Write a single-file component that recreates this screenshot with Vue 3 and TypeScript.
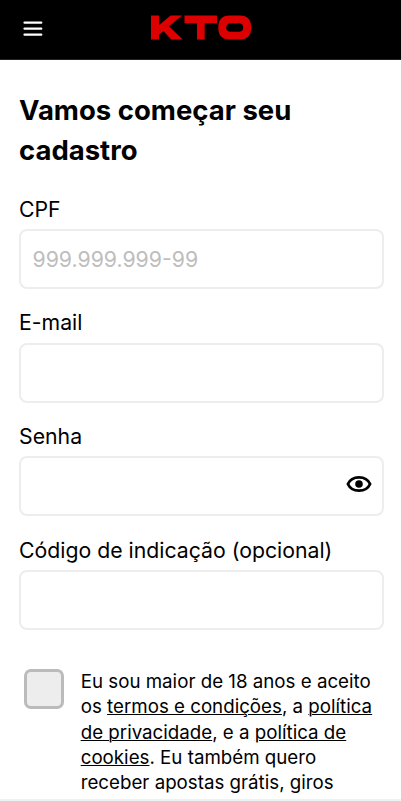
<script setup lang="ts">
import { ref } from 'vue'

interface Field {
  id: string
  label: string
  placeholder?: string
  type: string
}

const fields: Field[] = [
  { id: 'cpf', label: 'CPF', placeholder: '999.999.999-99', type: 'text' },
  { id: 'email', label: 'E-mail', type: 'email' },
  { id: 'senha', label: 'Senha', type: 'password' },
  { id: 'codigo', label: 'Código de indicação (opcional)', type: 'text' },
]

const values = ref<Record<string, string>>({ cpf: '', email: '', senha: '', codigo: '' })
const showPassword = ref(false)
const accepted = ref(false)

function inputType(field: Field): string {
  return field.type === 'password' && showPassword.value ? 'text' : field.type
}
</script>

<template>
  <div class="page">
    <header class="topbar">
      <button class="menu" type="button" aria-label="Menu">
        <svg width="20" height="18" viewBox="0 0 20 18">
          <path d="M1.6 2.6H18.2M1.6 8.6H18.2M1.6 14.6H18.2" stroke="#fff" stroke-width="2.4" stroke-linecap="round" />
        </svg>
      </button>
      <svg class="logo" width="102" height="26" viewBox="0 0 102 26" fill="#dd0000" aria-label="KTO">
        <path d="M1 1.5H9V11.2L20.5 1.5H32.2L18.9 12.2L32.8 25.5H21.2L13.4 17L9 20.7V25.5H1Z" />
        <path d="M34.5 1.5H67V9.2H54.7V25.5H47V9.2H34.5Z" />
        <path
          fill-rule="evenodd"
          d="M79.5 1.5H90Q101.2 1.5 101.2 13.5Q101.2 25.5 90 25.5H79.5Q68.3 25.5 68.3 13.5Q68.3 1.5 79.5 1.5ZM81 9.2Q76.2 9.2 76.2 13.5Q76.2 17.8 81 17.8H88.5Q93.2 17.8 93.2 13.5Q93.2 9.2 88.5 9.2Z"
        />
      </svg>
    </header>

    <main class="content">
      <h1 class="title">Vamos começar seu cadastro</h1>

      <form class="form" @submit.prevent>
        <div v-for="field in fields" :key="field.id" class="field">
          <label class="label" :for="field.id">{{ field.label }}</label>
          <div class="box">
            <input
              :id="field.id"
              v-model="values[field.id]"
              class="input"
              :type="inputType(field)"
              :placeholder="field.placeholder"
            />
            <button
              v-if="field.type === 'password'"
              class="eye"
              type="button"
              aria-label="Senha"
              @click="showPassword = !showPassword"
            >
              <svg width="26" height="18" viewBox="0 0 26 18" fill="none">
                <path d="M1.9 9C4 4.4 8 2.3 13 2.3S22 4.4 24.1 9C22 13.6 18 15.7 13 15.7S4 13.6 1.9 9Z" stroke="#000" stroke-width="2.8" stroke-linejoin="round" />
                <circle cx="13" cy="9" r="3.8" fill="#000" />
              </svg>
            </button>
          </div>
        </div>

        <div class="terms">
          <input v-model="accepted" class="check" type="checkbox" aria-label="Eu sou maior de 18 anos" />
          <p class="text">
            Eu sou maior de 18 anos e aceito os <a href="#">termos e condições</a>, a
            <a href="#">política de privacidade</a>, e a <a href="#">política de cookies</a>. Eu também quero receber
            apostas grátis, giros
          </p>
        </div>
      </form>
    </main>

    <footer class="bottom"></footer>
  </div>
</template>

<style>
body {
  background: #fff;
}
</style>

<style scoped>
.page {
  display: flex;
  flex-direction: column;
  box-sizing: border-box;
  height: 801px;
  overflow: hidden;
  background: #fff;
  color: #000;
  font-family: Inter, 'Liberation Sans', sans-serif;
}

.topbar {
  display: grid;
  grid-template-columns: 1fr auto 1fr;
  align-items: start;
  flex: none;
  box-sizing: border-box;
  height: 60px;
  padding: 14px 0 0 23px;
  background: #000;
  border-bottom: 1px solid #222;
}

.menu,
.eye {
  display: flex;
  padding: 0;
  border: 0;
  background: none;
}

.menu {
  padding-top: 6px;
}

.logo {
  margin-right: 23px;
}

.content {
  flex: 1;
  min-height: 0;
  overflow: hidden;
  padding: 30.4px 17px 0 19px;
}

.title {
  margin: 0 0 22.4px;
  font-size: 27.5px;
  font-weight: 700;
  line-height: 40px;
}

.field {
  height: 113.6px;
}

.label {
  display: block;
  height: 36.3px;
  font-size: 21.25px;
  line-height: 33px;
}

.box {
  display: flex;
  align-items: center;
  box-sizing: border-box;
  height: 60px;
  padding: 0 10px 0 11.5px;
  border: 2px solid #ededed;
  border-radius: 8px;
}

.input {
  flex: 1;
  min-width: 0;
  padding: 0;
  border: 0;
  outline: 0;
  background: none;
  color: #000;
  font: inherit;
  font-size: 21.25px;
}

.input::placeholder {
  color: #bdbdbd;
}

.eye {
  margin-top: -5px;
}

.terms {
  display: flex;
  align-items: flex-start;
  gap: 16.7px;
  padding: 21.5px 0 0 5px;
}

.check {
  flex: none;
  appearance: none;
  box-sizing: border-box;
  width: 40px;
  height: 40px;
  margin: 0;
  border: 3px solid #bbb;
  border-radius: 7px;
  background: #ededed;
}

.check:checked {
  background: #bbb;
}

.text {
  margin: 0.25px 0 0;
  font-size: 18.73px;
  line-height: 25.35px;
}

.text a {
  color: inherit;
  text-decoration-thickness: 1px;
}

.bottom {
  flex: none;
  height: 2px;
  background: #e9f4f5;
}
</style>
